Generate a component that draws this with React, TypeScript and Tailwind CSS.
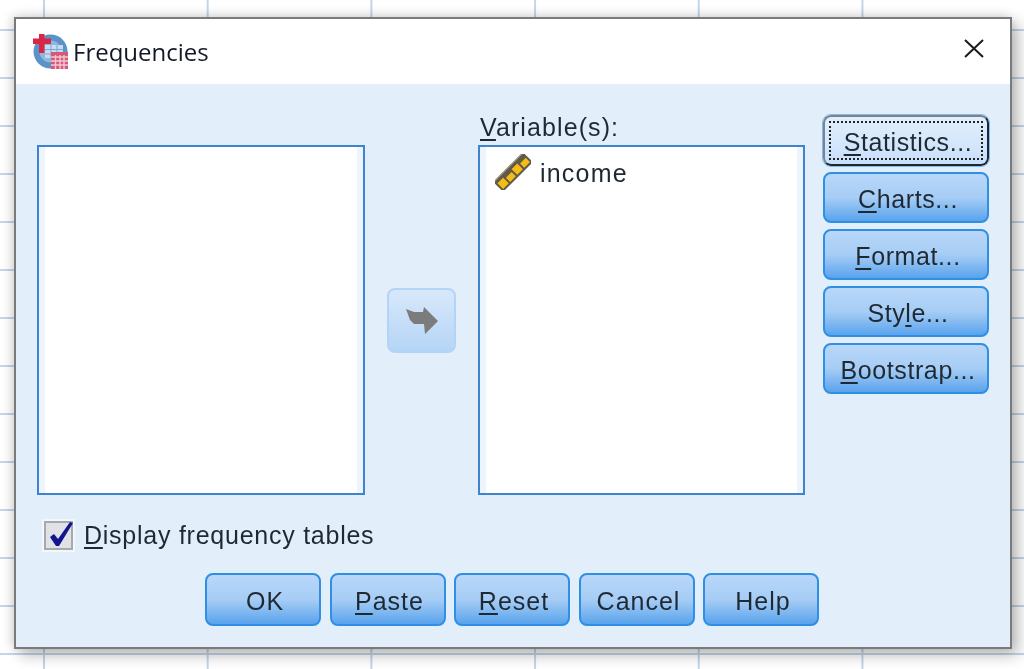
const font = "font-['Liberation_Sans',Arial,sans-serif]"

const AppIcon = () => (
  <svg width="36" height="36" viewBox="0 0 36 36" className="shrink-0">
    <circle cx="17.5" cy="17.5" r="17" fill="#5b93c8" />
    <circle cx="17.5" cy="17.5" r="11" fill="#8db8df" />
    <rect x="12" y="11" width="18" height="13" fill="#c5dcf1" />
    <path d="M12 15.5h18M12 20h18M18 11v13M24 11v13" stroke="#7ba7d2" strokeWidth="1" />
    <rect x="18" y="18" width="17" height="17" fill="#d45a78" />
    <path d="M18 23h17M18 27h17M18 31h17M22.5 21v14M27 21v14M31 21v14" stroke="#f3c6d2" strokeWidth="1.4" />
    <path d="M0 4.500h18v5.500H0zM6 0h5.500v19H6z" fill="#d92645" />
  </svg>
)

const RulerIcon = () => (
  <svg width="36" height="36" viewBox="0 0 36 36" className="shrink-0">
    <g transform="rotate(-45 18 18)">
      <rect x="-3" y="11" width="42" height="14" fill="#5f5b49" />
      <path d="M-3 11.500h42" stroke="#a8a28c" strokeWidth="1" />
      <path d="M-1 15h8v8h-8zM9 17h8v6H9zM19 15h8v8h-8zM29 17h8v6h-8z" fill="#f7bb14" />
    </g>
  </svg>
)

const ArrowIcon = () => (
  <svg width="34" height="28" viewBox="0 0 34 28">
    <path d="M1 2 L9 5 L18 5 L19 0 L33 14 L20 27 L19 17 L9 17 L5 13 Z" fill="#7c7c7c" />
  </svg>
)

const CheckMark = () => (
  <svg width="26" height="27" viewBox="0 0 26 27" className="absolute left-[2px] top-[-2px]">
    <path d="M2 16 L6 13 L10 18 L22 1 L25 2 L11 25 L8 25 Z" fill="#14148f" />
  </svg>
)

const Key = ({ label, hotkey }: { label: string; hotkey?: number }) => {
  if (hotkey === undefined) return <>{label}</>
  return (
    <>
      {label.slice(0, hotkey)}
      <span className="underline underline-offset-[3px] decoration-[2px]">{label[hotkey]}</span>
      {label.slice(hotkey + 1)}
    </>
  )
}

const PushButton = ({
  label,
  hotkey,
  size,
  tracking,
}: {
  label: string
  hotkey?: number
  size: string
  tracking: string
}) => (
  <button
    className={`${size} ${tracking} flex items-center justify-center rounded-[8px] border-2 border-[#2f8fe4] bg-gradient-to-b from-[#b9d7f9] via-[#a6cdf5] to-[#58a3ec] pl-[4px] pt-[4px] text-[25px] text-[#1f2933] ${font}`}
  >
    <span>
      <Key label={label} hotkey={hotkey} />
    </span>
  </button>
)

const ListBox = ({ children }: { children?: React.ReactNode }) => (
  <div className="h-[350px] border-2 border-[#3d83cf] bg-[#edf4fc] px-[6px]">
    <div className="h-full bg-white">{children}</div>
  </div>
)

export default function App() {
  const sideSize = "h-[51px] w-[166px]"
  const bottomSize = "h-[53px] w-[116px]"
  const sideTracking = "tracking-[0.6px]"
  const bottomTracking = "tracking-[1px]"

  return (
    <div className="h-[669px] w-[1024px] overflow-hidden bg-white bg-[linear-gradient(to_right,#c3d6ea_2px,transparent_2px),linear-gradient(to_bottom,#c3d6ea_2px,transparent_2px)] bg-[size:163.700px_48px] bg-[position:43px_29px] pl-[14px] pt-[17px] blur-[0.4px]">
      <div className="flex h-[632px] w-[998px] flex-col border-2 border-[#7a7a7a] shadow-[6px_6px_14px_rgba(0,0,0,0.28),-3px_-2px_10px_rgba(0,0,0,0.12)]">
        <div className="flex h-[65px] shrink-0 items-center bg-white pl-[17px] pr-[26px]">
          <AppIcon />
          <span className="ml-[4px] font-['Open_Sans',sans-serif] text-[24px] text-[#111827]">Frequencies</span>
          <svg width="20" height="19" viewBox="0 0 20 19" className="mb-[6px] ml-auto">
            <path d="M1 1 L19 18 M19 1 L1 18" stroke="#1a1a1a" strokeWidth="2" />
          </svg>
        </div>

        <div className="flex-1 bg-[#e2eefa] pl-[21px] pt-[31px]">
          <div className="flex h-[380px] items-start">
            <div className="w-[328px] pt-[30px]">
              <ListBox />
            </div>
            <button className="ml-[22px] mt-[173px] flex h-[65px] w-[69px] items-center justify-center rounded-[8px] border-2 border-[#b4d4f5] bg-gradient-to-b from-[#d8e8fa] to-[#b5d5f6]">
              <ArrowIcon />
            </button>
            <div className="ml-[22px] w-[327px]">
              <div className={`h-[30px] pl-[2px] text-[25px] leading-[24px] tracking-[1.1px] text-[#1f2933] ${font}`}>
                <Key label="Variable(s):" hotkey={0} />
              </div>
              <ListBox>
                <div className="flex items-center pl-[9px] pt-[4px]">
                  <RulerIcon />
                  <span className={`ml-[9px] pt-[4px] text-[25px] tracking-[1.2px] text-[#1f2933] ${font}`}>income</span>
                </div>
              </ListBox>
            </div>
            <div className="ml-[18px] flex flex-col gap-[6px]">
              <button
                className={`${sideSize} flex items-center justify-center rounded-[8px] border-2 border-[#7d848c] border-b-[#1d2733] border-r-[#1d2733] bg-gradient-to-b from-[#e2effd] to-[#c9e0fa] p-[4px] text-[25px] tracking-[0.6px] text-[#1f2933] outline-1 outline-[#7db9f2] ${font}`}
              >
                <span className="flex h-full w-full items-center justify-center border-2 border-dotted border-[#222] pl-[4px] pt-[4px]">
                  <span>
                    <Key label="Statistics..." hotkey={0} />
                  </span>
                </span>
              </button>
              <PushButton label="Charts..." hotkey={0} size={sideSize} tracking={sideTracking} />
              <PushButton label="Format..." hotkey={0} size={sideSize} tracking={sideTracking} />
              <PushButton label="Style..." hotkey={3} size={sideSize} tracking={sideTracking} />
              <PushButton label="Bootstrap..." hotkey={0} size={sideSize} tracking={sideTracking} />
            </div>
          </div>

          <div className="ml-[7px] mt-[26px] flex h-[29px] items-center">
            <div className="relative h-[29px] w-[29px] border-2 border-[#a9a9a9] bg-[#dfe2e6] outline-2 outline-[#f2f7fd]">
              <CheckMark />
            </div>
            <span className={`ml-[11px] text-[25px] tracking-[0.75px] text-[#1f2933] ${font}`}>
              <Key label="Display frequency tables" hotkey={0} />
            </span>
          </div>

          <div className="ml-[168px] mt-[23px] flex gap-[8.500px]">
            <PushButton label="OK" size={bottomSize} tracking={bottomTracking} />
            <PushButton label="Paste" hotkey={0} size={bottomSize} tracking={bottomTracking} />
            <PushButton label="Reset" hotkey={0} size={bottomSize} tracking={bottomTracking} />
            <PushButton label="Cancel" size={bottomSize} tracking={bottomTracking} />
            <PushButton label="Help" size={bottomSize} tracking={bottomTracking} />
          </div>
        </div>
      </div>
    </div>
  )
}
